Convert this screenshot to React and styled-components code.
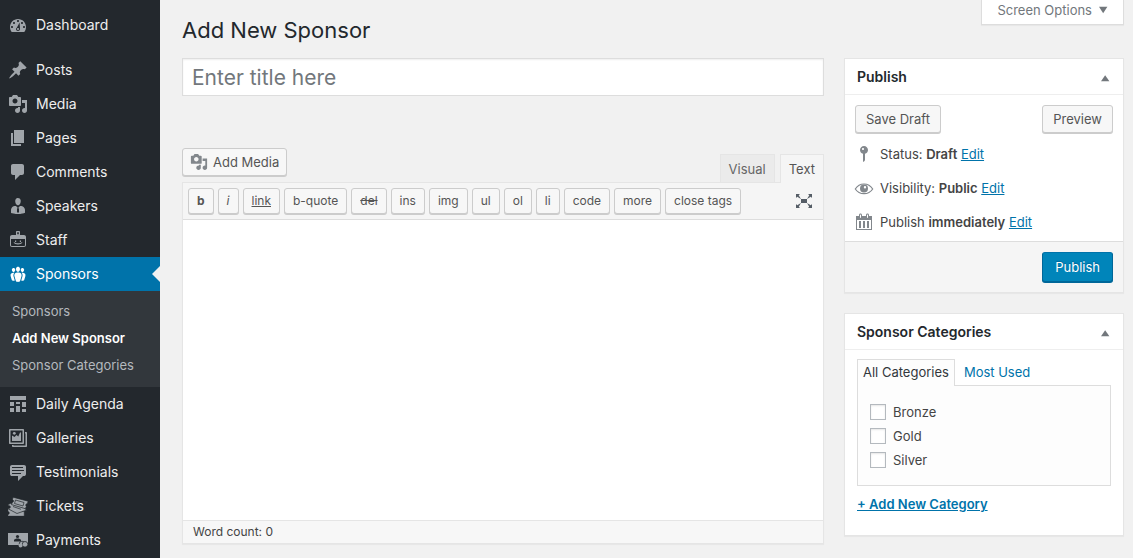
import React, { useState } from "react";
import styled, { createGlobalStyle, css } from "styled-components";

const icons = {
  dashboard: (
    <path d="M3.76 17h12.48c1.1-1.37 1.76-3.11 1.76-5 0-4.42-3.58-8-8-8s-8 3.58-8 8c0 1.89.66 3.63 1.76 5zM10 5c.55 0 1 .45 1 1s-.45 1-1 1-1-.45-1-1 .45-1 1-1zM6 7c.55 0 1 .45 1 1s-.45 1-1 1-1-.45-1-1 .45-1 1-1zm8 0c.55 0 1 .45 1 1s-.45 1-1 1-1-.45-1-1 .45-1 1-1zm-5.05 5.55L11.600 7.500 12 14c0 1.1-.9 2-2 2s-2-.9-2-2c0-.57.55-1.080.95-1.450zM4 11c.55 0 1 .45 1 1s-.45 1-1 1-1-.45-1-1 .45-1 1-1zm12 0c.55 0 1 .45 1 1s-.45 1-1 1-1-.45-1-1 .45-1 1-1zm-5 3c0-.55-.45-1-1-1s-1 .45-1 1 .45 1 1 1 1-.45 1-1z" />
  ),
  posts: (
    <path d="M10.44 3.02l1.82-1.82 6.36 6.35-1.83 1.82c-1.05-.68-2.48-.57-3.41.36l-.75.75c-.92.93-1.04 2.35-.35 3.41l-1.83 1.82-2.41-2.41-2.8 2.79c-.42.42-3.38 2.71-3.8 2.29s1.86-3.39 2.28-3.81l2.79-2.79L4.1 9.36l1.83-1.82c1.05.69 2.48.57 3.4-.36l.75-.75c.93-.92 1.05-2.35.36-3.41z" />
  ),
  media: (
    <path d="M13 11V4c0-.55-.45-1-1-1h-1.67L9 1H5L3.67 3H2c-.55 0-1 .45-1 1v7c0 .55.45 1 1 1h10c.55 0 1-.45 1-1zM7 4.5c1.38 0 2.5 1.12 2.5 2.5S8.38 9.5 7 9.5 4.5 8.38 4.5 7 5.62 4.5 7 4.5zM14 6h5v10.5c0 1.38-1.12 2.5-2.5 2.5S14 17.88 14 16.5s1.12-2.5 2.5-2.5c.17 0 .34.02.5.05V9h-3V6zm-4 8.05V13h2v3.5c0 1.38-1.12 2.5-2.5 2.5S7 17.88 7 16.5 8.12 14 9.5 14c.17 0 .34.02.5.05z" />
  ),
  pages: <path d="M6 15V2h10v13H6zm-1 1h8v2H3V5h2v11z" />,
  comments: (
    <path d="M5 2h9c1.1 0 2 .9 2 2v7c0 1.1-.9 2-2 2h-2l-5 5v-5H5c-1.1 0-2-.9-2-2V4c0-1.1.9-2 2-2z" />
  ),
  speakers: (
    <path d="M7.3 6l-.03-.19c-.04-.37-.05-.73-.03-1.08.02-.36.1-.71.25-1.04.14-.32.31-.61.52-.86s.49-.46.83-.6c.34-.15.72-.23 1.13-.23.69 0 1.26.2 1.71.59s.76.87.91 1.44.18 1.16.09 1.78l-.03.19c-.01.09-.05.25-.11.48-.05.24-.12.47-.2.69-.08.21-.19.45-.34.72-.14.27-.3.49-.47.69-.18.19-.4.34-.67.48-.27.13-.55.19-.86.19s-.59-.06-.87-.19c-.26-.13-.49-.29-.67-.5-.18-.2-.34-.42-.49-.66-.15-.25-.26-.49-.34-.73-.09-.25-.16-.47-.21-.67-.06-.21-.1-.37-.12-.5zm9.2 6.24c.41.7.5 1.41.5 2.14v2.49c0 .03-.12.08-.29.13-.18.04-.42.13-.97.27-.55.12-1.1.24-1.65.34s-1.19.19-1.95.27c-.75.08-1.46.12-2.13.12-.68 0-1.39-.04-2.14-.12-.75-.07-1.4-.17-1.98-.27-.58-.11-1.08-.23-1.56-.34-.49-.11-.8-.21-1.06-.29L3 16.87v-2.49c0-.75.07-1.46.46-2.15s.81-1.25 1.5-1.68C5.66 10.12 7.19 10 8 10l1.67 1.67L9 13v3l1.02 1.08L11 16v-3l-.68-1.33L11.97 10c.77 0 2.2.07 2.9.52.71.45 1.21 1.02 1.63 1.72z" />
  ),
  staff: (
    <path
      fillRule="evenodd"
      d="M9 1h2c.55 0 1 .45 1 1v3h4c1.100 0 2 .9 2 2v8c0 1.100-.9 2-2 2H4c-1.100 0-2-.9-2-2V7c0-1.100.9-2 2-2h4V2c0-.55.45-1 1-1zM9.200 2.200v2h1.600v-2zM3 9v6c0 .55.45 1 1 1h12c.55 0 1-.45 1-1V9zM7 10.500h1.200V12H7zM11.800 10.500H13V12h-1.200zM5.500 12.500l1-.3c1 1.500 6 1.500 7 0l1 .3c-1.400 2.500-7.600 2.500-9 0z"
    />
  ),
  sponsors: (
    <path d="M8.03 4.46c-.29 1.28.55 3.46 1.97 3.46 1.41 0 2.25-2.18 1.96-3.46-.22-.98-1.08-1.63-1.96-1.63-.89 0-1.74.65-1.97 1.63zm-4.13.9c-.25 1.08.47 2.93 1.67 2.93s1.92-1.85 1.67-2.93c-.19-.83-.92-1.39-1.67-1.39s-1.48.56-1.67 1.39zm8.86 0c-.25 1.08.47 2.93 1.66 2.93 1.2 0 1.92-1.85 1.67-2.93-.19-.83-.92-1.39-1.67-1.39-.74 0-1.47.56-1.66 1.39zm-.59 11.43l1.25-4.3C14.2 10 12.71 8.47 10 8.47c-2.72 0-4.21 1.53-3.44 4.02l1.26 4.3C8.05 17.51 9 18 10 18c.98 0 1.94-.49 2.17-1.21zm-6.1-7.63c-.49.67-.96 1.83-.42 3.59l1.12 3.79c-.34.2-.77.31-1.2.31-.85 0-1.65-.41-1.85-1.03l-1.07-3.65c-.65-2.11.61-3.4 2.92-3.4.27 0 .54.02.79.06-.1.1-.2.22-.29.33zm8.35-.39c2.31 0 3.58 1.29 2.92 3.4l-1.07 3.65c-.2.62-1 1.03-1.85 1.03-.43 0-.86-.11-1.2-.31l1.11-3.77c.55-1.78.08-2.94-.42-3.61-.08-.11-.18-.23-.28-.33.25-.04.51-.06.79-.06z" />
  ),
  agenda: (
    <path d="M2 2h16v4H2V2zm0 10V8h4v4H2zm6-2V8h4v2H8zm6 3V8h4v5h-4zm-6 5v-6h4v6H8zm-6 0v-4h4v4H2zm12 0v-3h4v3h-4z" />
  ),
  galleries: (
    <>
      <path
        fillRule="evenodd"
        d="M2 1h13c.55 0 1 .45 1 1v13c0 .55-.45 1-1 1H2c-.55 0-1-.45-1-1V2c0-.55.45-1 1-1zm.5 1.500v12h12v-12z"
      />
      <path d="M4 13V7.500L6.500 9l2-2 1.800 1.500L12 4.500h1V13z" />
      <circle cx="6.300" cy="5.300" r="1.400" />
      <path d="M17 4h1c.55 0 1 .45 1 1v13c0 .55-.45 1-1 1H5c-.55 0-1-.45-1-1v-1h1.500v.5h12V5.500H17z" />
    </>
  ),
  testimonials: (
    <path d="M4 3h12c.55 0 1.02.2 1.41.59S18 4.45 18 5v7c0 .55-.2 1.02-.59 1.41S16.55 14 16 14h-1l-5 5v-5H4c-.55 0-1.02-.2-1.41-.59S2 12.55 2 12V5c0-.55.2-1.02.59-1.41S3.45 3 4 3zm11 2H4v1h11V5zm1 3H4v1h12V8zm-3 3H4v1h9v-1z" />
  ),
  tickets: (
    <g stroke="#23282d" strokeWidth=".7">
      <path d="M-.3 12.500H2l6 3.500 8.300-1v5.300H-.3v-1.800c2 0 2-3 0-3z" />
      <path d="m0 8.500 2.800-1.200 13.500 4.500 2.200 2.400-9.500 3.300L.5 13l1.800-1.500C2.500 10 1.300 9.300 0 9.800z" />
      <path d="m5 1.200 15.200 4-.8 2.500c-1.400-.3-2.200 1.700-1 2.600l-1 2.400L3.500 8.600l.7-2.200c1.300 0 2-2 .3-2.800z" />
      <path d="m7.500 4 8.500 2.500-1 3.500L6.500 7.500z" fill="none" />
      <path d="m5 10.500 8 2.800" />
    </g>
  ),
  payments: (
    <>
      <path d="M0 3h20v12H0z" />
      <circle cx="9.500" cy="6.500" r="1.600" fill="#23282d" />
      <path d="M6 11.500V9.800L8.300 8.500h2.400L13 9.800v1.700z" fill="#23282d" />
      <circle cx="14" cy="14" r="2.800" stroke="#23282d" strokeWidth=".8" />
      <circle cx="17" cy="14.300" r="2.800" stroke="#23282d" strokeWidth=".8" />
      <circle cx="12.500" cy="15.500" r="1.900" />
    </>
  ),
  pin: (
    <path d="M14 6c0 1.860-1.280 3.410-3 3.860V16c0 1-2 2-2 2V9.860c-1.720-.45-3-2-3-3.860 0-2.210 1.790-4 4-4s4 1.790 4 4zM8 5c0 .55.45 1 1 1s1-.45 1-1-.45-1-1-1-1 .45-1 1z" />
  ),
  eye: (
    <>
      <path
        d="M1.300 11C3.500 7.500 6.500 6 10 6s6.500 1.500 8.700 5c-2.200 3.300-5.200 4.700-8.700 4.700S3.500 14.300 1.300 11z"
        fill="none"
        stroke="currentColor"
        strokeWidth="1.200"
      />
      <path d="M10 6.500a4 4 0 1 0 4 4 4 4 0 0 0-4-4zm1 1.500a1.200 1.200 0 1 1 0 2.400A1.200 1.200 0 0 1 11 8z" />
    </>
  ),
  calendar: (
    <path d="M15 4h3v14H2V4h3V3c0-.83.67-1.500 1.500-1.500S8 2.170 8 3v1h4V3c0-.83.67-1.500 1.500-1.500S15 2.170 15 3v1zM6 3v2.500c0 .28.22.5.5.5s.5-.22.5-.5V3c0-.28-.22-.5-.5-.5S6 2.720 6 3zm7 0v2.500c0 .28.22.5.5.5s.5-.22.5-.5V3c0-.28-.22-.5-.5-.5s-.5.22-.5.5zm4 14V8H3v9h14zM7 16V9H5v7h2zm4 0V9H9v7h2zm4 0V9h-2v7h2z" />
  ),
  fullscreen: (
    <path d="M7 8h6v4H7zm-5 5v4h4l-1.200-1.200L7 12l-3.800 2.200M14 17h4v-4l-1.200 1.200L13 12l2.200 3.800M14 3l1.300 1.300L13 8l3.800-2.200L18 7V3M6 3H2v4l1.200-1.200L7 8 4.700 4.300" />
  ),
  up: <path d="M5 14h10.500L10.200 6.500z" />,
  down: <path d="M5 6h10.500L10.200 14z" />,
};

const Icon = ({ name, size = 20 }) => (
  <IconSvg viewBox="0 0 20 20" width={size} height={size} aria-hidden="true">
    {icons[name]}
  </IconSvg>
);

const menu = [
  { name: "Posts", icon: "posts" },
  { name: "Media", icon: "media" },
  { name: "Pages", icon: "pages" },
  { name: "Comments", icon: "comments" },
  { name: "Speakers", icon: "speakers" },
  { name: "Staff", icon: "staff" },
  {
    name: "Sponsors",
    icon: "sponsors",
    current: true,
    children: ["Sponsors", "Add New Sponsor", "Sponsor Categories"],
  },
  { name: "Daily Agenda", icon: "agenda" },
  { name: "Galleries", icon: "galleries" },
  { name: "Testimonials", icon: "testimonials" },
  { name: "Tickets", icon: "tickets" },
  { name: "Payments", icon: "payments" },
];

const quicktags = [
  { label: "b", look: "bold" },
  { label: "i", look: "italic" },
  { label: "link", look: "underline" },
  { label: "b-quote" },
  { label: "del", look: "strike" },
  { label: "ins" },
  { label: "img" },
  { label: "ul" },
  { label: "ol" },
  { label: "li" },
  { label: "code" },
  { label: "more" },
  { label: "close tags" },
];

const publishRows = [
  { icon: "pin", label: "Status:", value: "Draft" },
  { icon: "eye", label: "Visibility:", value: "Public" },
  { icon: "calendar", label: "Publish", value: "immediately" },
];

const categories = ["Bronze", "Gold", "Silver"];

const App = () => {
  const [title, setTitle] = useState("");
  const [content, setContent] = useState("");
  const words = content.split(/\s+/).filter(Boolean).length;

  const menuItems = menu.map((item) => (
    <li key={item.name}>
      <MenuLink href="#" $current={item.current}>
        <Icon name={item.icon} />
        {item.name}
      </MenuLink>
      {item.children && (
        <SubMenu>
          {item.children.map((child) => (
            <li key={child}>
              <SubLink href="#" $current={child === "Add New Sponsor"}>
                {child}
              </SubLink>
            </li>
          ))}
        </SubMenu>
      )}
    </li>
  ));

  return (
    <Page>
      <GlobalStyle />
      <Sidebar aria-label="Main menu">
        <Menu>
          <DashboardItem>
            <MenuLink href="#">
              <Icon name="dashboard" />
              Dashboard
            </MenuLink>
          </DashboardItem>
          {menuItems}
        </Menu>
      </Sidebar>

      <Content>
        <Header>
          <Heading>Add New Sponsor</Heading>
          <ScreenOptions type="button">
            Screen Options
            <Icon name="down" size={16} />
          </ScreenOptions>
        </Header>

        <Columns>
          <Main>
            <TitleInput
              type="text"
              aria-label="Title"
              placeholder="Enter title here"
              value={title}
              onChange={(e) => setTitle(e.target.value)}
            />

            <EditorTools>
              <MediaButton type="button">
                <Icon name="media" size={18} />
                Add Media
              </MediaButton>
              <EditorTabs>
                <EditorTab type="button">Visual</EditorTab>
                <EditorTab type="button" $active>
                  Text
                </EditorTab>
              </EditorTabs>
            </EditorTools>

            <Editor>
              <Toolbar>
                {quicktags.map((tag) => (
                  <TagButton key={tag.label} type="button" $look={tag.look}>
                    {tag.label}
                  </TagButton>
                ))}
                <FullscreenButton type="button" aria-label="Fullscreen">
                  <Icon name="fullscreen" />
                </FullscreenButton>
              </Toolbar>
              <TextArea
                aria-label="Content"
                value={content}
                onChange={(e) => setContent(e.target.value)}
              />
              <StatusBar>Word count: {words}</StatusBar>
            </Editor>
          </Main>

          <Side>
            <Box>
              <BoxHeader>
                <BoxTitle>Publish</BoxTitle>
                <ToggleButton type="button" aria-label="Toggle Publish">
                  <Icon name="up" size={16} />
                </ToggleButton>
              </BoxHeader>
              <DraftActions>
                <Button type="button">Save Draft</Button>
                <Button type="button">Preview</Button>
              </DraftActions>
              <PublishList>
                {publishRows.map((row) => (
                  <PublishRow key={row.icon}>
                    <Icon name={row.icon} />
                    <span>
                      {row.label} <b>{row.value}</b> <a href="#">Edit</a>
                    </span>
                  </PublishRow>
                ))}
              </PublishList>
              <BoxFooter>
                <PrimaryButton type="button">Publish</PrimaryButton>
              </BoxFooter>
            </Box>

            <Box>
              <BoxHeader>
                <BoxTitle>Sponsor Categories</BoxTitle>
                <ToggleButton type="button" aria-label="Toggle Categories">
                  <Icon name="up" size={16} />
                </ToggleButton>
              </BoxHeader>
              <CategoryBody>
                <CategoryTabs>
                  <CategoryTab type="button" $active>
                    All Categories
                  </CategoryTab>
                  <CategoryTab type="button">Most Used</CategoryTab>
                </CategoryTabs>
                <CategoryPanel>
                  {categories.map((category) => (
                    <CategoryLabel key={category}>
                      <Checkbox type="checkbox" />
                      {category}
                    </CategoryLabel>
                  ))}
                </CategoryPanel>
                <AddLink href="#">+ Add New Category</AddLink>
              </CategoryBody>
            </Box>
          </Side>
        </Columns>
      </Content>
    </Page>
  );
};

const GlobalStyle = createGlobalStyle`
  * {
    box-sizing: border-box;
  }

  body {
    margin: 0;
    background: #f1f1f1;
    color: #444;
    font-family: Inter, "Liberation Sans", sans-serif;
    font-size: 13px;
    line-height: 18px;
  }

  button, input, textarea {
    font: inherit;
    color: inherit;
  }

  button {
    cursor: pointer;
  }

  a {
    color: #0073aa;
  }
`;

const IconSvg = styled.svg`
  display: block;
  flex: none;
  fill: currentColor;
`;

const Page = styled.div`
  display: flex;
  min-height: 100vh;
`;

const Sidebar = styled.nav`
  flex: none;
  width: 160px;
  padding-top: 8px;
  background: #23282d;
`;

const Menu = styled.ul`
  margin: 0;
  padding: 0;
  list-style: none;
`;

const DashboardItem = styled.li`
  margin-bottom: 11px;
`;

const MenuLink = styled.a`
  position: relative;
  display: flex;
  align-items: center;
  gap: 8px;
  height: 34px;
  padding: 0 8px;
  color: #eee;
  font-size: 14px;
  text-decoration: none;

  svg {
    color: #a0a5aa;
  }

  ${({ $current }) =>
    $current &&
    css`
      background: #0073aa;
      color: #fff;

      svg {
        color: #fff;
      }

      &::after {
        content: "";
        position: absolute;
        top: 9px;
        right: 0;
        border: 8px solid transparent;
        border-left: 0;
        border-right-color: #f1f1f1;
      }
    `}
`;

const SubMenu = styled.ul`
  margin: 0;
  padding: 7px 12px 8px;
  background: #32373c;
  list-style: none;
`;

const SubLink = styled.a`
  display: block;
  color: ${({ $current }) => ($current ? "#fff" : "#b4b9be")};
  font-weight: ${({ $current }) => ($current ? 600 : 400)};
  line-height: 27px;
  text-decoration: none;
  white-space: nowrap;
`;

const Content = styled.main`
  flex: 1;
  min-width: 0;
  padding: 0 9px 14px 22px;
`;

const Header = styled.header`
  display: flex;
  align-items: flex-start;
  justify-content: space-between;
  height: 58px;
`;

const Heading = styled.h1`
  margin: 0;
  padding-top: 15px;
  color: #23282d;
  font-size: 22px;
  font-weight: 400;
  line-height: 30px;
`;

const ScreenOptions = styled.button`
  display: flex;
  align-items: center;
  gap: 3px;
  height: 25px;
  padding: 0 12px 4px 15px;
  border: 1px solid #ddd;
  border-top: 0;
  background: #fff;
  box-shadow: 0 1px 1px rgba(0, 0, 0, 0.04);
  color: #72777c;
`;

const Columns = styled.div`
  display: grid;
  grid-template-columns: minmax(0, 1fr) 280px;
  gap: 20px;
`;

const Main = styled.div`
  min-width: 0;
`;

const TitleInput = styled.input`
  display: block;
  width: 100%;
  height: 38px;
  padding: 0 9px;
  border: 1px solid #ddd;
  background: #fff;
  box-shadow: inset 0 1px 2px rgba(0, 0, 0, 0.07);
  font-size: 21px;

  &::placeholder {
    color: #72777c;
    opacity: 1;
  }
`;

const EditorTools = styled.div`
  display: flex;
  align-items: flex-end;
  justify-content: space-between;
  margin-top: 52px;
`;

const Button = styled.button`
  height: 28px;
  padding: 0 10px;
  border: 1px solid #ccc;
  border-radius: 3px;
  background: #f7f7f7;
  box-shadow: 0 1px 0 #ccc;
  color: #555;
`;

const MediaButton = styled(Button)`
  display: flex;
  align-items: center;
  gap: 5px;
  margin-bottom: 6px;
  padding: 0 7px;

  svg {
    color: #82878c;
  }
`;

const EditorTabs = styled.div`
  display: flex;
  gap: 5px;
`;

const EditorTab = styled.button`
  height: 28px;
  padding: 0 8px;
  border: 1px solid #e5e5e5;
  border-bottom: 0;
  background: #ebebeb;
  color: #666;

  ${({ $active }) =>
    $active &&
    css`
      z-index: 1;
      height: 29px;
      margin-bottom: -1px;
      background: #f5f5f5;
      color: #555;
    `}
`;

const Editor = styled.div`
  border: 1px solid #e5e5e5;
  background: #fff;
  box-shadow: 0 1px 1px rgba(0, 0, 0, 0.04);
`;

const Toolbar = styled.div`
  display: flex;
  gap: 4px;
  padding: 5px;
  border-bottom: 1px solid #ddd;
  background: #f5f5f5;
`;

const tagLooks = {
  bold: css`
    font-weight: 700;
  `,
  italic: css`
    font-style: italic;
  `,
  underline: css`
    text-decoration: underline;
  `,
  strike: css`
    text-decoration: line-through;
  `,
};

const TagButton = styled(Button)`
  height: 26px;
  padding: 0 8px;
  font-size: 12px;
  ${({ $look }) => tagLooks[$look]}
`;

const FullscreenButton = styled.button`
  display: flex;
  align-items: center;
  margin-left: auto;
  padding: 0 4px;
  border: 0;
  background: none;
  color: #555d66;
`;

const TextArea = styled.textarea`
  display: block;
  width: 100%;
  height: 300px;
  padding: 10px;
  border: 0;
  outline: 0;
  background: #fff;
  resize: none;
`;

const StatusBar = styled.div`
  padding: 2px 10px;
  border-top: 1px solid #e5e5e5;
  background: #f7f7f7;
  font-size: 12px;
`;

const Side = styled.aside`
  display: flex;
  flex-direction: column;
  gap: 20px;
`;

const Box = styled.section`
  border: 1px solid #e5e5e5;
  background: #fff;
  box-shadow: 0 1px 1px rgba(0, 0, 0, 0.04);
`;

const BoxHeader = styled.div`
  display: flex;
  align-items: center;
  justify-content: space-between;
  height: 36px;
  padding: 0 10px 0 12px;
  border-bottom: 1px solid #eee;
`;

const BoxTitle = styled.h2`
  margin: 0;
  color: #23282d;
  font-size: 14px;
  font-weight: 600;
`;

const ToggleButton = styled.button`
  padding: 2px 0 0;
  border: 0;
  background: none;
  color: #72777c;
`;

const DraftActions = styled.div`
  display: flex;
  justify-content: space-between;
  padding: 10px 10px 0;
`;

const PublishList = styled.ul`
  margin: 0;
  padding: 4px 10px 2px;
  list-style: none;
`;

const PublishRow = styled.li`
  display: flex;
  align-items: center;
  gap: 6px;
  height: 34px;
  margin-left: -1px;

  svg {
    color: #82878c;
  }

  b {
    font-weight: 600;
  }
`;

const BoxFooter = styled.div`
  display: flex;
  justify-content: flex-end;
  padding: 10px;
  border-top: 1px solid #ddd;
  background: #f5f5f5;
`;

const PrimaryButton = styled(Button)`
  height: 30px;
  padding: 0 12px;
  border-color: #0073aa #006799 #006799;
  background: #0085ba;
  box-shadow: 0 1px 0 #006799;
  color: #fff;
  text-shadow: 0 -1px 1px #006799;
`;

const CategoryBody = styled.div`
  padding: 9px 12px 22px;
`;

const CategoryTabs = styled.div`
  display: flex;
`;

const CategoryTab = styled.button`
  height: 26px;
  padding: 0 8px 2px;
  border: 1px solid transparent;
  border-bottom: 0;
  background: none;
  color: #0073aa;

  ${({ $active }) =>
    $active &&
    css`
      z-index: 1;
      height: 27px;
      margin-bottom: -1px;
      padding: 0 5px 3px;
      border-color: #ddd;
      background: #fdfdfd;
      color: #32373c;
    `}
`;

const CategoryPanel = styled.div`
  display: flex;
  flex-direction: column;
  gap: 6px;
  padding: 17px 12px 16px;
  border: 1px solid #ddd;
  background: #fdfdfd;
`;

const CategoryLabel = styled.label`
  display: flex;
  align-items: center;
  gap: 7px;
`;

const Checkbox = styled.input`
  appearance: none;
  width: 16px;
  height: 16px;
  margin: 0;
  border: 1px solid #b4b9be;
  background: #fff;
  box-shadow: inset 0 1px 2px rgba(0, 0, 0, 0.1);

  &:checked {
    background: #0073aa;
  }
`;

const AddLink = styled.a`
  display: inline-block;
  margin-top: 9px;
  font-weight: 600;
`;

export default App;
